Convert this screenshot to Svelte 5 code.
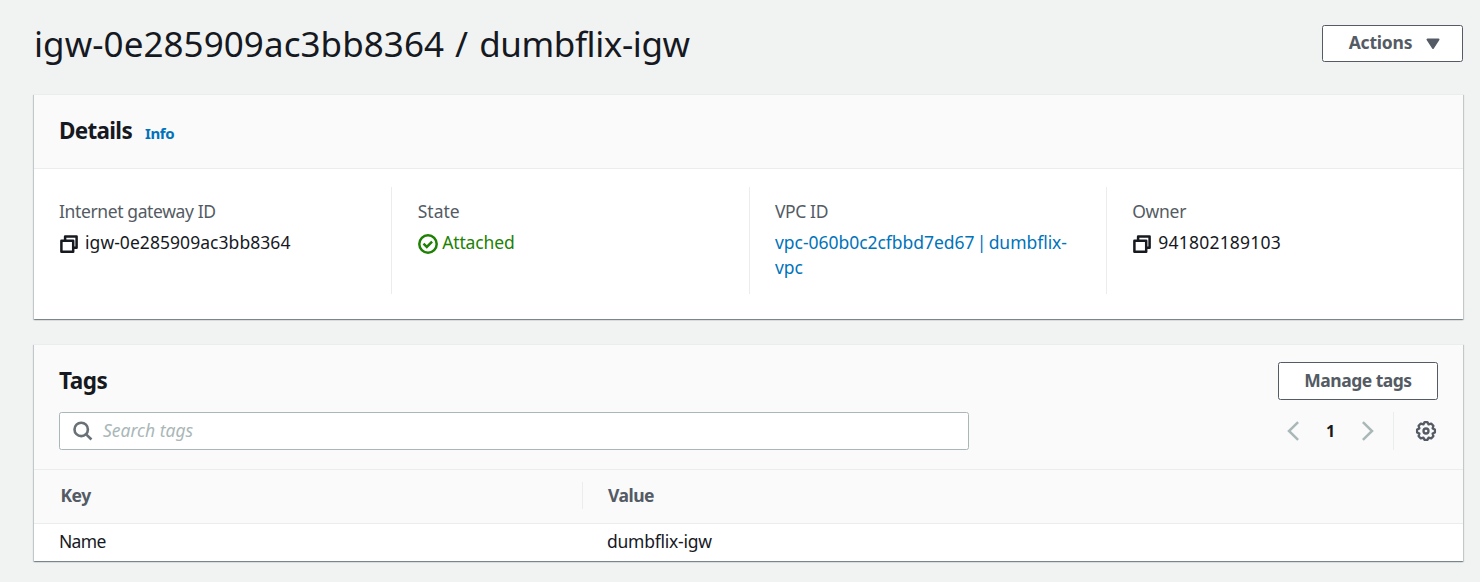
<script>
  const tags = [{ key: 'Name', value: 'dumbflix-igw' }];
</script>

{#snippet copyIcon()}
  <svg class="copy" viewBox="0 0 20 20" width="20" height="20" fill="none" stroke="#16191f" stroke-width="2.5" stroke-linejoin="round">
    <path d="M2.4 6.8h11.8v11H2.4z" />
    <path d="M6.1 6.4V2.6H17.6v11.2h-3.2" />
  </svg>
{/snippet}

<main>
  <header class="page-head">
    <h1><span class="t-id">igw-0e285909ac3bb8364</span> <span>/</span> <span class="t-title">dumbflix-igw</span></h1>
    <button class="btn actions">
      <span class="t-actions">Actions</span>
      <svg width="14" height="12" viewBox="0 0 14 12"><path d="M1.5 1.5h11L7 10z" fill="#545b64" stroke="#545b64" stroke-width="2" stroke-linejoin="round" /></svg>
    </button>
  </header>

  <section class="panel details">
    <div class="panel-head">
      <h2 class="t-details">Details</h2>
      <a class="info" href="#info">Info</a>
    </div>
    <div class="cols">
      <div class="col">
        <div class="label t-igid">Internet gateway ID</div>
        <div class="value">{@render copyIcon()}<span class="t-igw">igw-0e285909ac3bb8364</span></div>
      </div>
      <div class="col">
        <div class="label t-state">State</div>
        <div class="value ok">
          <svg class="check" width="20" height="20" viewBox="0 0 20 20" fill="none" stroke="#1d8102" stroke-width="2.5">
            <circle cx="10" cy="10" r="8.7" />
            <path d="M5.5 9.7l3.3 3.2 5.3-5.2" />
          </svg><span class="t-att">Attached</span>
        </div>
      </div>
      <div class="col">
        <div class="label t-vpc">VPC ID</div>
        <div class="value"><a class="t-link" href="#vpc">vpc-060b0c2cfbbd7ed67 | dumbflix-<br />vpc</a></div>
      </div>
      <div class="col">
        <div class="label t-owner">Owner</div>
        <div class="value">{@render copyIcon()}<span class="t-num">941802189103</span></div>
      </div>
    </div>
  </section>

  <section class="panel tags">
    <div class="tags-head">
      <div class="row title-row">
        <h2 class="t-tags">Tags</h2>
        <button class="btn manage"><span class="t-manage">Manage tags</span></button>
      </div>
      <div class="row">
        <div class="search">
          <svg width="20" height="20" viewBox="0 0 20 20" fill="none" stroke="#687078" stroke-width="2.6">
            <circle cx="8.2" cy="8.4" r="6.7" />
            <path d="M12.9 13.1l5.5 5.4" />
          </svg>
          <span class="t-search">Search tags</span>
        </div>
        <div class="pager">
          <svg class="prev" width="12" height="20" viewBox="0 0 12 20" fill="none" stroke="#aab7b8" stroke-width="2.5"><path d="M11.1 1.2L2 10l9.1 8.8" /></svg>
          <b>1</b>
          <svg class="next" width="12" height="20" viewBox="0 0 12 20" fill="none" stroke="#aab7b8" stroke-width="2.5"><path d="M.9 1.2L10 10l-9.1 8.8" /></svg>
          <span class="gear">
            <svg width="22" height="22" viewBox="-11 -11 22 22" fill="none" stroke="#545b64" stroke-width="2.3" stroke-linejoin="round">
              <path d="M-1.4-8.9H1.4L2.6-6.6 5.2-7.4 7.4-5.2 6.6-2.6 8.9-1.4V1.4L6.6 2.6 7.4 5.2 5.2 7.4 2.6 6.6 1.4 8.9H-1.4L-2.6 6.6-5.2 7.4-7.4 5.2-6.6 2.6-8.9 1.4V-1.4L-6.6-2.6-7.4-5.2-5.2-7.4-2.6-6.6z" />
              <circle r="2.5" />
            </svg>
          </span>
        </div>
      </div>
    </div>
    <div class="grid th">
      <div><span class="t-key">Key</span></div>
      <div class="second"><span class="t-value">Value</span></div>
    </div>
    {#each tags as tag}
      <div class="grid td">
        <div><span class="t-name">{tag.key}</span></div>
        <div><span class="t-dumb">{tag.value}</span></div>
      </div>
    {/each}
  </section>
</main>

<style>
  :global(body) { background: #f1f3f3; }
  main {
    box-sizing: border-box;
    height: 582px;
    overflow: hidden;
    padding: 25px 17px 0 34px;
    font-family: "Noto Sans", "Open Sans", sans-serif;
    font-size: 17.5px;
    line-height: 25px;
    color: #16191f;
    white-space: nowrap;
  }
  h1, h2 { margin: 0; }
  a { color: #0073bb; text-decoration: none; }
  svg { display: block; flex: none; }
  .page-head { display: flex; justify-content: space-between; align-items: flex-start; height: 69px; }
  h1 { font-size: 35px; line-height: 38px; font-weight: 400; word-spacing: 1.9px; }
  .btn {
    box-sizing: border-box;
    display: flex;
    align-items: center;
    justify-content: center;
    height: 37px;
    padding: 0 0 1px;
    border: 1px solid #545b64;
    border-radius: 2.5px;
    background: #fff;
    color: #545b64;
    font: 700 17.5px/25px "Noto Sans", "Open Sans", sans-serif;
  }
  .actions { width: 141px; gap: 14px; padding: 0 0 2px 4px; }
  .actions svg { margin-top: 2px; }
  .panel {
    box-sizing: border-box;
    background: #fff;
    border-top: 1px solid #eaeded;
    box-shadow: 0 1px 1px 0 rgba(0, 28, 36, .3), 1px 1px 1px 0 rgba(0, 28, 36, .15), -1px 1px 1px 0 rgba(0, 28, 36, .15);
  }
  .details { height: 225px; margin-bottom: 25px; }
  .panel-head {
    box-sizing: border-box;
    display: flex;
    align-items: baseline;
    gap: 13px;
    height: 74px;
    padding: 20px 25px 0;
    background: #fafafa;
    border-bottom: 1px solid #eaeded;
  }
  h2 { font-size: 22.5px; line-height: 31px; font-weight: 700; }
  .info { font-size: 15px; font-weight: 700; letter-spacing: -.4px; }
  .cols { display: grid; grid-template-columns: repeat(4, 1fr); padding-top: 18px; }
  .col { box-sizing: border-box; height: 107px; padding: 12px 0 0 25px; }
  .col + .col { border-left: 1px solid #eaeded; }
  .label { color: #545b64; height: 31px; }
  .value { display: flex; }
  .copy { margin: 3.5px 6px 0 0; }
  .check { margin: 4px 4.5px 0 .5px; }
  .ok { color: #1d8102; }
  .tags { height: 217px; }
  .tags-head { box-sizing: border-box; height: 125px; padding: 17px 25px 0; background: #fafafa; border-bottom: 1px solid #eaeded; }
  .row { display: flex; justify-content: space-between; align-items: center; height: 38px; }
  .title-row { margin-bottom: 12px; }
  .title-row h2 { padding-bottom: 1px; }
  .manage { width: 160px; height: 38px; }
  .search {
    box-sizing: border-box;
    display: flex;
    align-items: center;
    gap: 10px;
    width: 910px;
    height: 38px;
    padding-left: 13px;
    background: #fff;
    border: 1px solid #aab7b8;
    border-radius: 2.5px;
    color: #aab7b8;
    font-style: italic;
  }
  .search span { padding-bottom: 1px; }
  .pager { display: flex; align-items: center; height: 38px; }
  .pager b { width: 63px; text-align: center; font-size: 16px; }
  .gear { display: flex; align-items: center; justify-content: flex-end; box-sizing: border-box; width: 44px; height: 38px; margin: 0 1px 0 19px; border-left: 1px solid #eaeded; }
  .grid { display: grid; grid-template-columns: 548px 1fr; align-items: center; }
  .grid > div { padding-left: 25px; }
  .th { box-sizing: border-box; height: 54px; padding-bottom: 2px; background: #fafafa; border-bottom: 1px solid #eaeded; color: #545b64; font-weight: 700; }
  .th > div { padding: 1px 0 1px 26px; }
  .th .second { border-left: 1px solid #eaeded; padding-left: 25px; }
  .td { height: 37px; padding-bottom: 2px; box-sizing: border-box; }

  .t-id { letter-spacing: .06px; }
  .t-title { letter-spacing: -.4px; }
  .t-actions { letter-spacing: -.2px; }
  .t-details { letter-spacing: -.7px; }
  .t-igid { letter-spacing: -.38px; }
  .t-igw { letter-spacing: .05px; }
  .t-att { letter-spacing: -.15px; }
  .t-state { padding-left: .5px; }
  .t-vpc { letter-spacing: -.4px; padding-left: .5px; }
  .t-link { word-spacing: -2.2px; letter-spacing: -.04px; padding-left: .5px; }
  .t-owner { letter-spacing: -.3px; padding-left: .5px; }
  .t-num { letter-spacing: .22px; padding-left: .5px; }
  .t-tags { letter-spacing: -.5px; }
  .t-manage { letter-spacing: -.5px; }
  .t-key { letter-spacing: -.5px; padding-left: .5px; }
  .t-value { letter-spacing: -.5px; }
  .t-name { letter-spacing: -.7px; }
  .t-dumb { letter-spacing: -.25px; }
</style>
